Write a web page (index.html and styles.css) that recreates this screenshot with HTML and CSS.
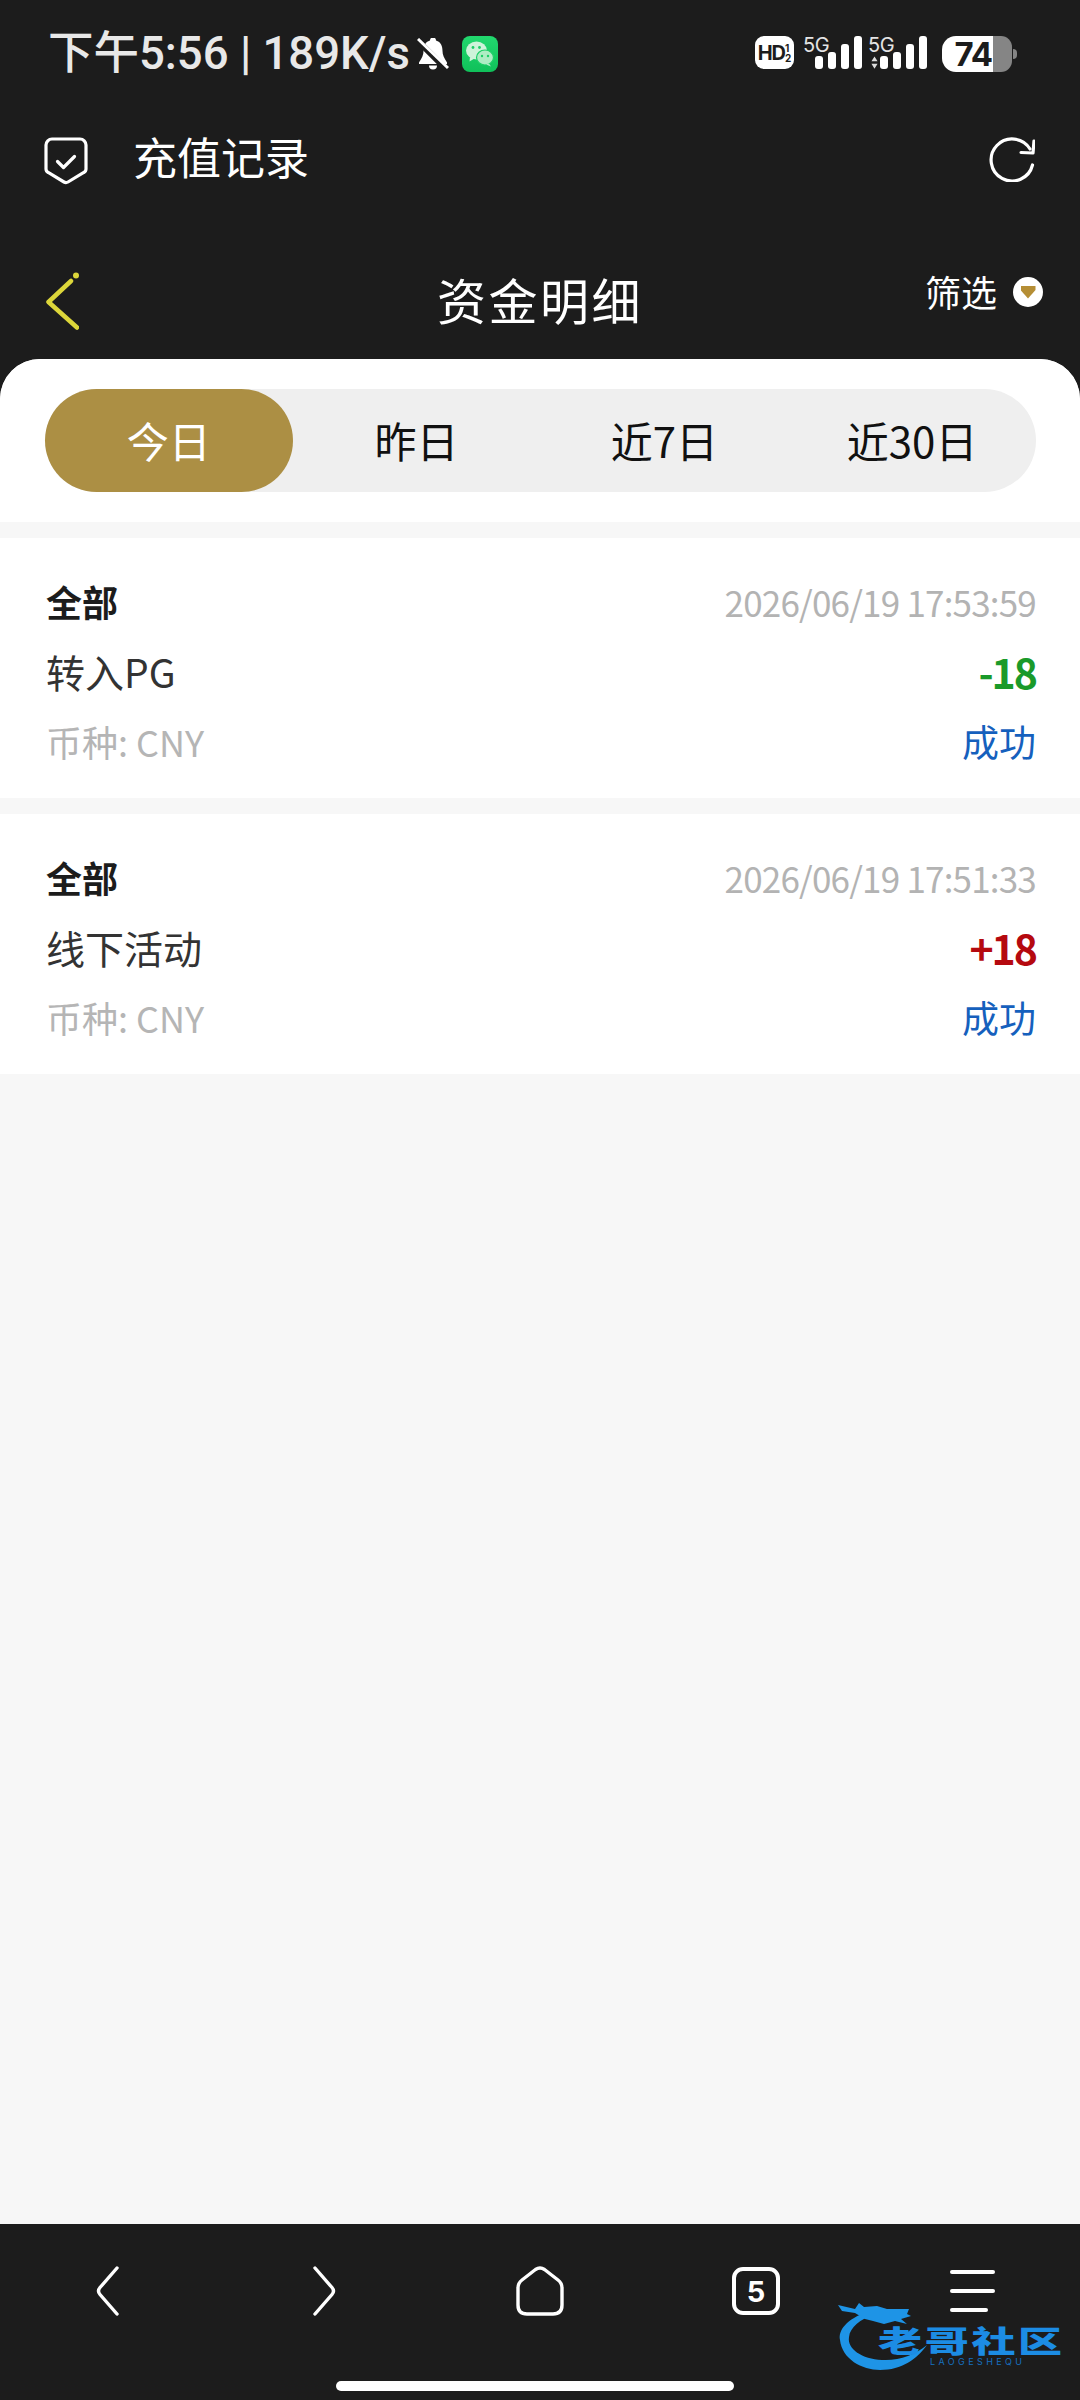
FILE: index.html
```html
<!DOCTYPE html>
<html lang="zh-CN">
<head>
  <meta charset="utf-8" />
  <title>资金明细</title>
  <link rel="stylesheet" href="styles.css">
</head>
<body>
  <div class="screen">
    <!-- status bar -->
    <div class="status">
      <div class="status-left">
        <span class="status-text">下午5:56 | 189K/s</span>
        <svg class="bell" viewBox="0 0 32 32">
          <path fill="#fff" d="M13 2.500a3 3 0 0 1 6 0C24 4 25.500 8 25.500 13c0 4 1.500 7 4.500 11.500v1.500H2v-1.500C5 20 6.500 17 6.500 13 6.500 8 8 4 13 2.500z"/>
          <path fill="#fff" d="M12 27.500h8a4 4 0 0 1-8 0z"/>
          <path stroke="#1c1c1c" stroke-width="6" d="M0 2l30 30"/>
          <path stroke="#fff" stroke-width="3" d="M1 1l30 29"/>
        </svg>
        <svg class="wechat" viewBox="0 0 36 36">
          <defs>
            <linearGradient id="wx" x1="0" y1="0" x2="0" y2="1">
              <stop offset="0" stop-color="#22d86e"/>
              <stop offset="1" stop-color="#10c05a"/>
            </linearGradient>
          </defs>
          <rect width="36" height="36" rx="8" fill="url(#wx)"/>
          <ellipse cx="14.500" cy="14.500" rx="10.500" ry="9" fill="#cdf3d9"/>
          <path d="M8 21l-.5 4.500 5-3z" fill="#cdf3d9"/>
          <ellipse cx="23" cy="21.500" rx="8.500" ry="7.500" fill="#aeecc4" stroke="#1cce66" stroke-width="1.200"/>
          <path d="M27 27.500l2 3-5-2z" fill="#aeecc4"/>
          <circle cx="11" cy="11.500" r="1.400" fill="#1cce66"/>
          <circle cx="17.500" cy="11.500" r="1.400" fill="#1cce66"/>
          <circle cx="20" cy="20" r="1.200" fill="#1cce66"/>
          <circle cx="26" cy="20" r="1.200" fill="#1cce66"/>
        </svg>
      </div>
      <div class="status-right">
        <span class="hd">HD<span class="hd-sim"><i>1</i><i>2</i></span></span>
        <div class="signal">
          <span class="five-g">5G</span>
          <span class="bars"><b class="b1"></b><b class="b2"></b><b class="b3"></b><b class="b4"></b></span>
        </div>
        <div class="signal">
          <span class="five-g">5G</span>
          <svg class="updown" viewBox="0 0 8 14"><path fill="#ddd" d="M4 0l3.500 5.500h-7zM4 14L.5 8.500h7z"/></svg>
          <span class="bars"><b class="b1"></b><b class="b2"></b><b class="b3"></b><b class="b4"></b></span>
        </div>
        <div class="battery"><span class="battery-level">74</span><span class="battery-empty"></span></div>
        <span class="battery-nub"></span>
      </div>
    </div>

    <!-- webview title -->
    <div class="topbar">
      <svg class="shield" viewBox="0 0 44 48">
        <path fill="none" stroke="#fff" stroke-width="3.200" d="M8 2h28a6 6 0 0 1 6 6v24a4 4 0 0 1-2.200 3.500L24 45a4 4 0 0 1-4 0L4.200 35.500A4 4 0 0 1 2 32V8a6 6 0 0 1 6-6z"/>
        <path fill="none" stroke="#fff" stroke-width="3.200" stroke-linecap="round" stroke-linejoin="round" d="M13.500 24.500l6 6 11-11"/>
      </svg>
      <span class="topbar-title">充值记录</span>
      <svg class="refresh" viewBox="0 0 46 46">
        <path fill="none" stroke="#fff" stroke-width="3.200" stroke-linecap="round" stroke-linejoin="round" d="M41 13A21 21 0 1 0 43.500 29"/>
        <path fill="none" stroke="#fff" stroke-width="3.200" stroke-linecap="round" stroke-linejoin="round" d="M32 16.500l12 .5 1-12"/>
      </svg>
    </div>

    <!-- page head -->
    <div class="head">
      <svg class="back" viewBox="0 0 33 58">
        <path fill="none" stroke="#dcd63a" stroke-width="4.500" stroke-linecap="round" stroke-linejoin="round" d="M25 9L2.500 30 31 55.500"/>
        <circle cx="30" cy="3.500" r="3" fill="#dcd63a"/>
      </svg>
      <h1 class="head-title">资金明细</h1>
      <div class="filter">
        <span class="filter-label">筛选</span>
        <span class="filter-dot"><i></i></span>
      </div>
    </div>

    <div class="sheet">
      <div class="tabs-wrap">
        <div class="tabs">
          <div class="tab active">今日</div>
          <div class="tab">昨日</div>
          <div class="tab">近7日</div>
          <div class="tab">近30日</div>
        </div>
      </div>

      <div class="record">
        <div class="row">
          <span class="rec-type">全部</span>
          <span class="rec-time">2026/06/19 17:53:59</span>
        </div>
        <div class="row">
          <span class="rec-name">转入PG</span>
          <span class="rec-amount out">-18</span>
        </div>
        <div class="row">
          <span class="rec-cur">币种: CNY</span>
          <span class="rec-state">成功</span>
        </div>
      </div>

      <div class="record">
        <div class="row">
          <span class="rec-type">全部</span>
          <span class="rec-time">2026/06/19 17:51:33</span>
        </div>
        <div class="row">
          <span class="rec-name">线下活动</span>
          <span class="rec-amount in">+18</span>
        </div>
        <div class="row">
          <span class="rec-cur">币种: CNY</span>
          <span class="rec-state">成功</span>
        </div>
      </div>
    </div>

    <!-- browser nav -->
    <div class="nav">
      <div class="nav-icons">
        <svg class="nav-chev" viewBox="0 0 24 50"><path fill="none" stroke="#fff" stroke-width="3.400" stroke-linecap="round" stroke-linejoin="round" d="M21 2L4 21.500q-3 3.500 0 7L21 48"/></svg>
        <svg class="nav-chev" viewBox="0 0 24 50"><path fill="none" stroke="#fff" stroke-width="3.400" stroke-linecap="round" stroke-linejoin="round" d="M3 2l17 19.500q3 3.500 0 7L3 48"/></svg>
        <svg class="nav-home" viewBox="0 0 48 50"><path fill="none" stroke="#fff" stroke-width="3.400" stroke-linejoin="round" d="M19.500 3.500q4.500-3 9 0L42 14q4 3 4 8v17q0 9-9 9H11q-9 0-9-9V22q0-5 4-8z"/></svg>
        <div class="nav-tabs">5</div>
        <div class="nav-menu"><i></i><i></i><i class="short"></i></div>
      </div>
      <div class="home-bar"></div>
    </div>

    <!-- watermark -->
    <div class="mark">
      <svg class="mark-dragon" viewBox="0 0 100 76">
        <path fill="#1e94e6" d="M30 15C10 22 1 33 3 43c2 19 22 30 40 30 22 0 37-11 47-25-12 10-28 16-45 15C25 62 10 52 12 40c1-10 12-18 24-22z"/>
        <path fill="#1e94e6" d="M1 8l17 4 4-6 5 4 13-1 10 3h22l-2 5 4 2-10 3 6 5-12-3-11 3-11-3-8-2-10-6-13-2z"/>
      </svg>
      <div class="mark-cn">老哥社区</div>
      <div class="mark-en">LAOGESHEQU</div>
    </div>
  </div>
</body>
</html>
```

FILE: styles.css
```css
* {
  box-sizing: border-box;
}

body {
  margin: 0;
  background: #f7f7f7;
  font-family: "Noto Sans CJK SC", "Noto Sans", sans-serif;
}

.screen {
  position: relative;
  display: flex;
  flex-direction: column;
  width: 1080px;
  height: 2400px;
  overflow: hidden;
  background: #1c1c1c;
}

/* status bar */
.status {
  display: flex;
  justify-content: space-between;
  align-items: flex-start;
  height: 108px;
  padding: 36px 63px 0 48px;
}

.status-left {
  display: flex;
  align-items: center;
  height: 36px;
}

.status-text {
  color: #e8e8e8;
  font-family: Roboto, "Noto Sans CJK SC", sans-serif;
  font-size: 45.500px;
  font-weight: 500;
  line-height: 36px;
  white-space: nowrap;
}

.bell {
  width: 32px;
  height: 32px;
  margin-left: 7px;
}

.wechat {
  width: 36px;
  height: 36px;
  margin-left: 13px;
}

.status-right {
  display: flex;
  align-items: flex-start;
  height: 36px;
}

.hd {
  display: flex;
  align-items: center;
  justify-content: center;
  width: 39px;
  height: 33px;
  margin-right: 9px;
  border-radius: 9px;
  background: #fff;
  color: #1c1c1c;
  font-family: Inter, sans-serif;
  font-size: 20px;
  font-weight: 700;
  letter-spacing: -1px;
}

.hd-sim {
  display: flex;
  flex-direction: column;
  font-size: 10px;
  line-height: 10px;
  letter-spacing: 0;
}

.hd-sim i {
  font-style: normal;
}

.signal {
  position: relative;
  width: 65px;
  height: 33px;
}

.five-g {
  position: absolute;
  top: -3px;
  left: 0;
  color: #e4e4e4;
  font-family: Inter, sans-serif;
  font-size: 20px;
  line-height: 24px;
  letter-spacing: -.5px;
}

.updown {
  position: absolute;
  left: 3px;
  bottom: 0;
  width: 7px;
  height: 13px;
}

.bars {
  position: absolute;
  right: 6px;
  bottom: 0;
  display: flex;
  align-items: flex-end;
  gap: 5px;
}

.bars b {
  display: block;
  width: 8px;
  border-radius: 3px;
  background: #fff;
}

.bars .b1 {
  height: 13px;
}

.bars .b2 {
  height: 17px;
}

.bars .b3 {
  height: 25px;
}

.bars .b4 {
  height: 33px;
}

.battery {
  display: flex;
  width: 70px;
  height: 36px;
  margin-left: 9px;
}

.battery-level {
  width: 51px;
  padding-right: 1px;
  border-radius: 14px 0 0 14px;
  background: #fff;
  color: #1c1c1c;
  font-family: Inter, sans-serif;
  font-size: 33px;
  font-weight: 700;
  line-height: 36px;
  text-align: right;
  letter-spacing: -1px;
}

.battery-empty {
  flex: 1;
  border-radius: 0 11px 11px 0;
  background: #858585;
}

.battery-nub {
  width: 4px;
  height: 10px;
  margin: 13px 0 0 1px;
  border-radius: 0 4px 4px 0;
  background: #858585;
}

/* top bars */
.topbar {
  display: flex;
  align-items: center;
  height: 102px;
  padding: 0 45px 0 44px;
}

.shield {
  width: 44px;
  height: 48px;
  margin-top: 3px;
}

.topbar-title {
  flex: 1;
  margin: 0 0 6px 45px;
  color: #fff;
  font-size: 44px;
}

.refresh {
  width: 46px;
  height: 46px;
}

.head {
  position: relative;
  display: flex;
  justify-content: space-between;
  height: 149px;
  padding: 62px 37px 0 46px;
}

.back {
  width: 33px;
  height: 58px;
}

.head-title {
  position: absolute;
  top: 59px;
  left: 0;
  right: 0;
  margin: 0;
  color: #fff;
  font-size: 49px;
  font-weight: 400;
  line-height: 60px;
  letter-spacing: 2.500px;
  text-align: center;
}

.filter {
  display: flex;
  align-items: center;
  gap: 16px;
  height: 40px;
  color: #fff;
  font-size: 36px;
}

.filter-label {
  margin-bottom: 2px;
}

.filter-dot {
  display: flex;
  align-items: center;
  justify-content: center;
  width: 30px;
  height: 30px;
  border-radius: 50%;
  background: #fff;
}

.filter-dot i {
  width: 15px;
  height: 13px;
  background: #b58e35;
  clip-path: polygon(0 0, 100% 0, 100% 35%, 50% 100%, 0 35%);
}

/* sheet */
.sheet {
  flex: 1;
  overflow: hidden;
  border-radius: 40px 40px 0 0;
  background: #f7f7f7;
}

.tabs-wrap {
  height: 163px;
  padding: 30px 44px 0 45px;
  background: #fff;
}

.tabs {
  display: grid;
  grid-template-columns: repeat(4, 1fr);
  height: 103px;
  border-radius: 52px;
  background: #efefef;
}

.tab {
  display: flex;
  align-items: center;
  justify-content: center;
  padding-bottom: 3px;
  border-radius: 52px;
  color: #111;
  font-size: 42px;
}

.tab.active {
  background: #ac8f44;
  color: #fff;
}

.record {
  display: flex;
  flex-direction: column;
  height: 260px;
  margin-top: 16px;
  padding: 28px 44px 0 46px;
  background: #fff;
}

.row {
  display: flex;
  align-items: center;
  justify-content: space-between;
  height: 70px;
}

.rec-type {
  color: #1c1c1c;
  font-size: 36px;
  font-weight: 700;
}

.rec-time {
  color: #b3b3b3;
  font-size: 35px;
  letter-spacing: -.8px;
}

.rec-name {
  color: #333;
  font-size: 39px;
}

.rec-amount {
  font-size: 41px;
  font-weight: 700;
  letter-spacing: -2px;
}

.rec-amount.out {
  color: #1a9a2a;
}

.rec-amount.in {
  color: #b5090f;
}

.rec-cur {
  color: #b5b5b5;
  font-size: 36px;
}

.rec-state {
  color: #1560bd;
  font-size: 37px;
}

/* browser nav */
.nav {
  display: flex;
  flex-direction: column;
  height: 176px;
  padding-top: 42px;
}

.nav-icons {
  display: grid;
  grid-template-columns: repeat(5, 1fr);
  justify-items: center;
  align-items: center;
  height: 50px;
}

.nav-chev {
  width: 24px;
  height: 50px;
}

.nav-home {
  width: 48px;
  height: 50px;
}

.nav-tabs {
  display: flex;
  align-items: center;
  justify-content: center;
  width: 48px;
  height: 48px;
  border: 4px solid #fff;
  border-radius: 11px;
  color: #fff;
  font-family: Inter, sans-serif;
  font-size: 29px;
  font-weight: 700;
}

.nav-menu {
  display: flex;
  flex-direction: column;
  gap: 15px;
  width: 45px;
}

.nav-menu i {
  height: 4px;
  border-radius: 2px;
  background: #fff;
}

.nav-menu .short {
  width: 38px;
}

.home-bar {
  width: 398px;
  height: 10px;
  margin: 65px 0 0 336px;
  border-radius: 5px;
  background: #fff;
}

/* watermark over the nav */
.mark {
  position: absolute;
  left: 837px;
  top: 2297px;
  width: 226px;
  height: 76px;
}

.mark-dragon {
  position: absolute;
  left: 0;
  top: 0;
  width: 100px;
  height: 76px;
}

.mark-cn {
  position: absolute;
  left: 41px;
  top: 24px;
  color: #1c8ce4;
  font-size: 44px;
  font-weight: 900;
  line-height: 36px;
  white-space: nowrap;
  letter-spacing: 2.700px;
  transform: scaleY(.68);
}

.mark-en {
  position: absolute;
  left: 93px;
  top: 60px;
  color: #1670c0;
  font-family: Inter, sans-serif;
  font-size: 9px;
  line-height: 10px;
  letter-spacing: 3.400px;
  white-space: nowrap;
}
```
